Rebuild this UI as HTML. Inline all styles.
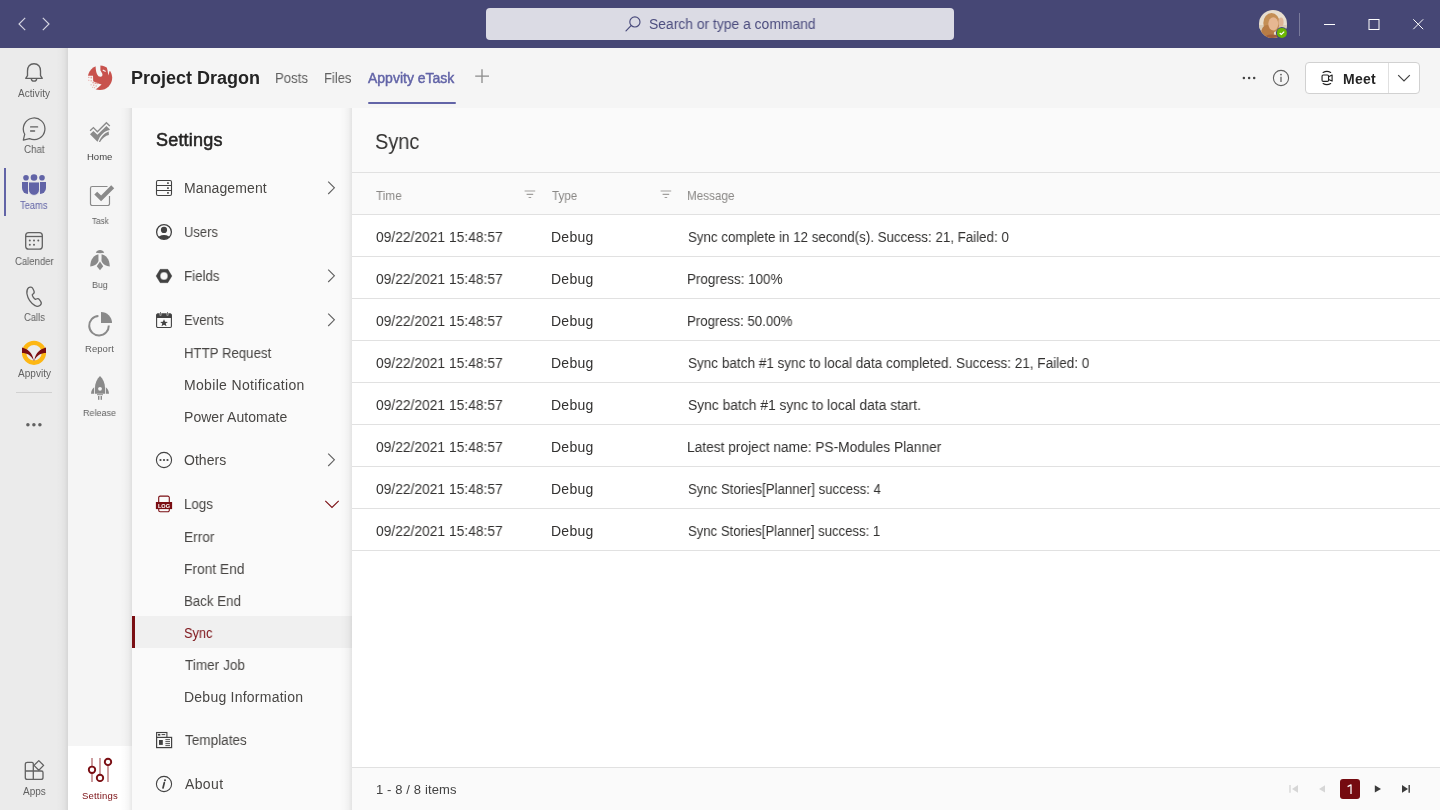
<!DOCTYPE html>
<html><head><meta charset="utf-8"><title>Sync</title>
<style>
*{box-sizing:border-box;margin:0;padding:0}
html,body{width:1440px;height:810px;overflow:hidden;font-family:"Liberation Sans",sans-serif;background:#fff}
.a{position:absolute;display:block}
.t{position:absolute;white-space:nowrap;line-height:1;will-change:transform}
</style></head><body>
<div class="a" style="left:0px;top:0px;width:1440px;height:48px;background:#464775"></div>
<svg class="a" style="left:0px;top:0px;" width="68" height="48" viewBox="0 0 68 48"><path d="M25.2 17.8 L19 24 L25.2 30.2" fill="none" stroke="#d6d6e2" stroke-width="1.15"/><path d="M42.8 17.8 L49 24 L42.8 30.2" fill="none" stroke="#d6d6e2" stroke-width="1.15"/></svg>
<div class="a" style="left:486px;top:8px;width:468px;height:32px;background:#dbdbe4;border-radius:4px"></div>
<svg class="a" style="left:620px;top:10px;" width="28" height="28" viewBox="0 0 28 28"><circle cx="14.9" cy="11.9" r="5.1" fill="none" stroke="#4a4b7c" stroke-width="1.15"/><path d="M11.1 15.7 L6 20.8" stroke="#4a4b7c" stroke-width="1.2" stroke-linecap="round"/></svg>
<div class="t" style="left:648.81px;top:17.15px;font-size:14px;color:#4b4c7e;transform:scaleX(0.9910);transform-origin:0 0">Search or type a command</div>
<svg class="a" style="left:1255px;top:6px;" width="36" height="36" viewBox="0 0 36 36"><defs><clipPath id="cc"><circle cx="18" cy="18" r="14"/></clipPath></defs><circle cx="18" cy="18" r="14" fill="#e8dece"/><g clip-path="url(#cc)"><rect x="4" y="19" width="28" height="4" fill="#d9ccb6"/><ellipse cx="16.5" cy="17" rx="8.2" ry="10" fill="#c48f55"/><ellipse cx="12.5" cy="27" rx="6.5" ry="8" fill="#b87c45"/><ellipse cx="18.3" cy="17.8" rx="5" ry="6.6" fill="#e6b792"/><ellipse cx="26" cy="16" rx="2.6" ry="4.5" fill="#e0b596"/><ellipse cx="17" cy="33.5" rx="9" ry="5" fill="#a2603a"/></g><circle cx="26.9" cy="26.9" r="6" fill="#464775"/><circle cx="26.9" cy="26.9" r="5" fill="#6bb700"/><path d="M24.7 27 L26.3 28.5 L29.2 25.6" fill="none" stroke="#fff" stroke-width="1.2"/></svg>
<div class="a" style="left:1299px;top:13px;width:1px;height:23px;background:rgba(255,255,255,0.28)"></div>
<svg class="a" style="left:1310px;top:10px;" width="120" height="28" viewBox="0 0 120 28"><path d="M14 14.5 H25" stroke="#fff" stroke-width="1"/><rect x="59" y="9.5" width="10" height="10" fill="none" stroke="#fff" stroke-width="1"/><path d="M103.3 9.3 L113.2 19.2 M113.2 9.3 L103.3 19.2" stroke="#fff" stroke-width="1"/></svg>
<div class="a" style="left:0px;top:48px;width:68px;height:762px;background:#ebebeb"></div>
<svg class="a" style="left:22px;top:60px;" width="24" height="24" viewBox="0 0 24 24"><path d="M12 3.7 C7.7 3.7 5.5 6.9 5.5 10.9 V15.7 L3.7 18.3 H20.3 L18.5 15.7 V10.9 C18.5 6.9 16.3 3.7 12 3.7 Z" fill="none" stroke="#616161" stroke-width="1.35" stroke-linejoin="round"/><path d="M9.3 18.5 A2.7 2.7 0 0 0 14.7 18.5" fill="none" stroke="#616161" stroke-width="1.3"/></svg>
<div class="t" style="left:18.00px;top:88.53px;font-size:10px;color:#616161;letter-spacing:0.043px">Activity</div>
<svg class="a" style="left:22px;top:116px;" width="24" height="26" viewBox="0 0 24 26"><path d="M2.75 18.2 A10.8 10.8 0 1 1 7.53 22.6 L1.3 24.1 Z" fill="none" stroke="#616161" stroke-width="1.25" stroke-linejoin="round"/><path d="M8.6 10.9 H15.6 M8.6 15 H12.6" stroke="#616161" stroke-width="1.3" stroke-linecap="round"/></svg>
<div class="t" style="left:23.51px;top:144.53px;font-size:10px;color:#616161;transform:scaleX(0.9756);transform-origin:0 0">Chat</div>
<div class="a" style="left:4px;top:168px;width:2px;height:48px;background:#6264a7"></div>
<svg class="a" style="left:22px;top:174px;" width="24" height="24" viewBox="0 0 24 24"><circle cx="4" cy="3.8" r="2.8" fill="#6264a7"/><circle cx="12" cy="3.5" r="3.3" fill="#6264a7"/><circle cx="20" cy="3.8" r="2.8" fill="#6264a7"/><path d="M0 8 H6 V20 A6 6 0 0 1 0 14 Z" fill="#6264a7"/><path d="M24 8 H18 V20 A6 6 0 0 0 24 14 Z" fill="#6264a7"/><path d="M6.5 8 H17.5 V15.9 A5.5 5.5 0 0 1 6.5 15.9 Z" fill="#6264a7" stroke="#ebebeb" stroke-width="0.9"/></svg>
<div class="t" style="left:20.31px;top:200.53px;font-size:10px;color:#6264a7;transform:scaleX(0.9343);transform-origin:0 0">Teams</div>
<svg class="a" style="left:22px;top:228px;" width="24" height="24" viewBox="0 0 24 24"><rect x="3.7" y="4.6" width="16.6" height="16.6" rx="3" fill="none" stroke="#616161" stroke-width="1.3"/><path d="M3.7 8.5 H20.3" stroke="#616161" stroke-width="1.3"/><circle cx="7.8" cy="12.6" r="1" fill="#616161"/><circle cx="12" cy="12.6" r="1" fill="#616161"/><circle cx="16.3" cy="12.6" r="1" fill="#616161"/><circle cx="7.8" cy="16.7" r="1" fill="#616161"/><circle cx="12" cy="16.7" r="1" fill="#616161"/></svg>
<div class="t" style="left:14.52px;top:256.54px;font-size:10px;color:#616161;transform:scaleX(0.9524);transform-origin:0 0">Calender</div>
<svg class="a" style="left:22.8px;top:284.4px;" width="24" height="24" viewBox="0 0 24 24"><path d="M5.5 3.7 C7 2.6 9 2.9 9.8 4.5 L10.9 6.8 C11.5 8 11.1 9.3 10.1 10 L9.3 10.6 C9.1 11.6 10.8 14.6 12.4 15.4 L13.4 15 C14.6 14.5 15.9 14.9 16.6 15.9 L17.8 17.7 C18.6 19 18.2 20.6 16.9 21.5 C15.4 22.5 13.5 22.6 12 21.6 C8 19.1 4.7 14.2 3.9 9.6 C3.6 7.3 4.2 4.9 5.5 3.7 Z" fill="none" stroke="#616161" stroke-width="1.25" stroke-linejoin="round"/></svg>
<div class="t" style="left:23.53px;top:312.54px;font-size:10px;color:#616161;transform:scaleX(0.9390);transform-origin:0 0">Calls</div>
<svg class="a" style="left:20px;top:340px;" width="28" height="28" viewBox="0 0 28 28"><circle cx="14" cy="12.8" r="9.9" fill="none" stroke="#fdb714" stroke-width="4.4"/><path d="M2 7.6 C7.5 9 12.3 12.5 13.6 20 L14.4 20 C15.7 12.5 20.5 9 26 7.6 L26 13 C21 13 16.5 15.5 14.4 20.4 L13.6 20.4 C11.5 15.5 7 13 2 13 Z" fill="#7a0e13"/></svg>
<div class="t" style="left:17.50px;top:368.54px;font-size:10px;color:#616161;letter-spacing:0.033px">Appvity</div>
<div class="a" style="left:16px;top:392px;width:36px;height:1px;background:#d1d1d1"></div>
<svg class="a" style="left:24px;top:418px;" width="20" height="12" viewBox="0 0 20 12"><circle cx="3.9" cy="6.8" r="1.75" fill="#616161"/><circle cx="9.9" cy="6.8" r="1.75" fill="#616161"/><circle cx="15.9" cy="6.8" r="1.75" fill="#616161"/></svg>
<svg class="a" style="left:22px;top:758px;" width="24" height="24" viewBox="0 0 24 24"><path d="M5.3 4.3 H10 A1.5 1.5 0 0 1 11.3 5.6 V21.4 H5.3 A2 2 0 0 1 3.3 19.4 V6.3 A2 2 0 0 1 5.3 4.3 Z" fill="none" stroke="#616161" stroke-width="1.3"/><path d="M3.3 13 H19.4 A1.6 1.6 0 0 1 21 14.6 V19.4 A2 2 0 0 1 19 21.4 H11.3" fill="none" stroke="#616161" stroke-width="1.3"/><path d="M16.8 2.6 L21.6 7.4 L16.8 12.2 L12 7.4 Z" fill="none" stroke="#616161" stroke-width="1.3" stroke-linejoin="round"/></svg>
<div class="t" style="left:23.00px;top:786.53px;font-size:10px;color:#616161;transform:scaleX(0.9821);transform-origin:0 0">Apps</div>
<div class="a" style="left:68px;top:48px;width:1372px;height:60px;background:#f5f5f5"></div>
<svg class="a" style="left:84px;top:62px;" width="32" height="32" viewBox="0 0 32 32"><circle cx="100" cy="77.8" r="12.2" transform="translate(-84 -62)" fill="#c8524d"/><path d="M11.4 2 L11.7 6 C12 11 13.6 14.8 16.4 14.8 C18.3 14.8 18.9 13 18.2 11.4 L16.4 8.3 L16.4 2 Z" fill="#f5f5f5"/><path d="M19 7.5 L21.9 8.9 L21.4 9.9 L18.5 8.6 Z" fill="#f5f5f5"/><path d="M22 2 L23.5 8.2 L24.4 13.6 L25.4 9.4 L28.5 6 L28.5 2 Z" fill="#f5f5f5"/><path d="M2 13.8 L9 13.8 L9.2 19.3 L13.5 21.2 L17.6 22.6 C15.5 24.5 13.5 26.2 11.6 27.6 L11.6 30 L2 30 Z" fill="#f5f5f5"/><g fill="#e3a39f"><rect x="4.2" y="14.8" width="1.2" height="1.2"/><rect x="6.5" y="14.8" width="1.6" height="1.6"/><rect x="4.3" y="17.8" width="1" height="1"/><rect x="6.6" y="18.2" width="1.2" height="1.2"/><rect x="8.4" y="19.8" width="1.5" height="1.5"/><rect x="10.6" y="20.2" width="1.8" height="1.8"/><rect x="12.6" y="20.8" width="1.4" height="1.4"/><rect x="6.6" y="22.3" width="1" height="1"/><rect x="9" y="22.6" width="1.4" height="1.1"/><rect x="11.6" y="23.4" width="1.2" height="1.2"/><rect x="8.2" y="24.8" width="1" height="1"/><rect x="10.1" y="25.2" width="1" height="1"/></g></svg>
<div class="t" style="left:131.40px;top:69.16px;font-size:18px;color:#242424;font-weight:bold;transform:scaleX(0.9984);transform-origin:0 0">Project Dragon</div>
<div class="t" style="left:275.16px;top:71.15px;font-size:14px;color:#616161;transform:scaleX(0.9431);transform-origin:0 0">Posts</div>
<div class="t" style="left:324.28px;top:71.15px;font-size:14px;color:#616161;transform:scaleX(0.9286);transform-origin:0 0">Files</div>
<div class="t" style="left:368.30px;top:71.15px;font-size:14px;color:#6264a7;-webkit-text-stroke:0.45px #6264a7">Appvity eTask</div>
<div class="a" style="left:368px;top:102px;width:88px;height:2px;background:#6264a7;border-radius:1px"></div>
<svg class="a" style="left:472px;top:66px;" width="20" height="20" viewBox="0 0 20 20"><path d="M10 3.2 V17 M3.2 10.1 H17" stroke="#8a8a8a" stroke-width="1.3"/></svg>
<svg class="a" style="left:1240px;top:70px;" width="20" height="16" viewBox="0 0 20 16"><circle cx="3.9" cy="8" r="1.25" fill="#424242"/><circle cx="9.1" cy="8" r="1.25" fill="#424242"/><circle cx="14.2" cy="8" r="1.25" fill="#424242"/></svg>
<svg class="a" style="left:1271px;top:68px;" width="20" height="20" viewBox="0 0 20 20"><circle cx="10" cy="10" r="7.6" fill="none" stroke="#616161" stroke-width="1.1"/><circle cx="10" cy="6.6" r="0.9" fill="#616161"/><path d="M10 8.8 V14" stroke="#616161" stroke-width="1.3"/></svg>
<div class="a" style="left:1305px;top:62px;width:115px;height:32px;background:#fff;border:1px solid #d1d1d1;border-radius:4px"></div>
<div class="a" style="left:1388px;top:63px;width:1px;height:30px;background:#e0e0e0"></div>
<svg class="a" style="left:1318px;top:68px;" width="18" height="20" viewBox="0 0 18 20"><path d="M5.1 4.5 Q8.9 2.2 12.7 4.5 M5.1 15.5 Q8.9 17.8 12.7 15.5" fill="none" stroke="#242424" stroke-width="1.1" stroke-linecap="round"/><rect x="4.05" y="6.95" width="6.5" height="6.45" rx="1.2" fill="none" stroke="#242424" stroke-width="1.15"/><path d="M10.6 8.7 L14.1 7.1 V13.1 L10.6 11.5" fill="none" stroke="#242424" stroke-width="1.15" stroke-linejoin="round"/></svg>
<div class="t" style="left:1343.10px;top:71.95px;font-size:14px;color:#242424;font-weight:bold;letter-spacing:0.233px">Meet</div>
<svg class="a" style="left:1394px;top:70px;" width="20" height="16" viewBox="0 0 20 16"><path d="M4.2 5.2 L10 11 L15.8 5.2" fill="none" stroke="#424242" stroke-width="1.2"/></svg>
<div class="a" style="left:68px;top:108px;width:64px;height:702px;background:#f5f5f5"></div>
<div class="a" style="left:68px;top:746px;width:64px;height:64px;background:#fff"></div>
<svg class="a" style="left:86px;top:118px;" width="28" height="28" viewBox="0 0 28 28"><polyline points="4.1,12.8 7.4,9.6 11.4,13.8 20.4,4.8 23.8,8" fill="none" stroke="#8a8a8a" stroke-width="1.35"/><path d="M4 16.3 L7.4 13 L11.4 16.8 L20.4 7.9 L23.8 11.2 L23.6 12 C18.5 13 14 17 11.8 23.5 L11.2 23.5 Z" fill="#8a8a8a"/><path d="M12.9 23.9 C15 18.7 18.5 15 22.7 13.6 L22.9 16.9 C19.5 17.6 16 20.2 14.1 23.9 Z" fill="#8a8a8a"/></svg>
<div class="t" style="left:87.21px;top:151.96px;font-size:9.5px;color:#424242;transform:scaleX(0.9917);transform-origin:0 0">Home</div>
<svg class="a" style="left:88px;top:184px;" width="28" height="24" viewBox="0 0 28 24"><path d="M19.5 2.5 H4.2 A1.7 1.7 0 0 0 2.5 4.2 V19.8 A1.7 1.7 0 0 0 4.2 21.5 H19.8 A1.7 1.7 0 0 0 21.5 19.8 V12" fill="none" stroke="#8a8a8a" stroke-width="1.2"/><path d="M6.3 10.6 L9.2 7.7 L13.1 11.5 L23.2 1.3 L26.2 4.3 L13.1 17.2 Z" fill="#8a8a8a"/></svg>
<div class="t" style="left:91.58px;top:215.96px;font-size:9.5px;color:#616161;transform:scaleX(0.8549);transform-origin:0 0">Task</div>
<svg class="a" style="left:88px;top:248px;" width="24" height="24" viewBox="0 0 24 24"><path d="M7.8 4.7 C8.5 2.9 10.1 2 12 2 C13.9 2 15.5 2.9 16.2 4.7 L12 5.2 Z" fill="#8a8a8a"/><path d="M10.4 6.2 C6 7 2.4 11 2.2 18.5 C5.6 18.3 9.2 16.5 10.5 13 Z" fill="#8a8a8a"/><path d="M13.6 6.2 C18 7 21.6 11 21.8 18.5 C18.4 18.3 14.8 16.5 13.5 13 Z" fill="#8a8a8a"/><path d="M12 13.5 L15.2 18.2 L12 22.2 L8.8 18.2 Z" fill="#8a8a8a"/></svg>
<div class="t" style="left:92.00px;top:279.96px;font-size:9.5px;color:#616161;transform:scaleX(0.9355);transform-origin:0 0">Bug</div>
<svg class="a" style="left:86px;top:310px;" width="28" height="28" viewBox="0 0 28 28"><path d="M12.4 5.9 A9.8 9.8 0 1 0 22.8 15.5" fill="none" stroke="#8a8a8a" stroke-width="2"/><path d="M15 2 A11 11 0 0 1 26 13 H15 Z" fill="#8a8a8a"/></svg>
<div class="t" style="left:85.20px;top:343.96px;font-size:9.5px;color:#616161;letter-spacing:0.060px">Report</div>
<svg class="a" style="left:88px;top:374px;" width="24" height="28" viewBox="0 0 24 28"><path d="M12 2 C15.3 5 17 9.5 17 13.5 V19.8 H7 V13.5 C7 9.5 8.7 5 12 2 Z" fill="#8a8a8a"/><circle cx="12" cy="14.8" r="1.9" fill="#f5f5f5"/><path d="M6.2 13.2 V19.8 H3 C3.1 17 4.3 14.6 6.2 13.2 Z" fill="#8a8a8a"/><path d="M17.8 13.2 V19.8 H21 C20.9 17 19.7 14.6 17.8 13.2 Z" fill="#8a8a8a"/><rect x="9" y="20.2" width="6" height="1" fill="#8a8a8a"/><rect x="10" y="22" width="1.4" height="3.8" fill="#8a8a8a"/><rect x="12.6" y="22" width="1.4" height="3.8" fill="#8a8a8a"/></svg>
<div class="t" style="left:83.24px;top:407.96px;font-size:9.5px;color:#616161;transform:scaleX(0.9496);transform-origin:0 0">Release</div>
<svg class="a" style="left:84px;top:754px;" width="32" height="32" viewBox="0 0 32 32"><path d="M8 4 V28 M16 4 V28 M24 4 V28" stroke="#b8787b" stroke-width="1.4"/><circle cx="8" cy="15.8" r="3.2" fill="#fff" stroke="#7a0e13" stroke-width="1.9"/><circle cx="16" cy="23.9" r="3.2" fill="#fff" stroke="#7a0e13" stroke-width="1.9"/><circle cx="24" cy="7.9" r="3.2" fill="#fff" stroke="#7a0e13" stroke-width="1.9"/></svg>
<div class="t" style="left:82.10px;top:790.96px;font-size:9.5px;color:#7a0e13;letter-spacing:0.200px">Settings</div>
<div class="a" style="left:132px;top:108px;width:220px;height:702px;background:#fafafa"></div>
<div class="t" style="left:155.70px;top:130.76px;font-size:18px;color:#252423;letter-spacing:0.200px;-webkit-text-stroke:0.55px #252423">Settings</div>
<svg class="a" style="left:154px;top:178px;" width="20" height="20" viewBox="0 0 20 20"><rect x="2.5" y="2.5" width="15" height="15" rx="1.4" fill="none" stroke="#424242" stroke-width="1.1"/><path d="M2.5 7.5 H17.5 M2.5 12.5 H17.5" stroke="#424242" stroke-width="1.1"/><rect x="13.1" y="4.2" width="1.7" height="1.7" rx="0.3" fill="#424242"/><rect x="13.1" y="9.2" width="1.7" height="1.7" rx="0.3" fill="#424242"/><rect x="13.1" y="14.1" width="1.7" height="1.7" rx="0.3" fill="#424242"/></svg>
<div class="t" style="left:183.90px;top:181.15px;font-size:14px;color:#484644;letter-spacing:0.111px">Management</div>
<svg class="a" style="left:324px;top:178px;" width="16" height="20" viewBox="0 0 16 20"><path d="M4.2 3.6 L10.4 9.8 L4.2 16" fill="none" stroke="#616161" stroke-width="1.1"/></svg>
<svg class="a" style="left:154px;top:222px;" width="20" height="20" viewBox="0 0 20 20"><defs><clipPath id="uc"><circle cx="10" cy="10" r="7.3"/></clipPath></defs><circle cx="10" cy="10" r="7.4" fill="none" stroke="#424242" stroke-width="1.3"/><circle cx="10" cy="7.9" r="3.1" fill="#424242"/><g clip-path="url(#uc)"><ellipse cx="10" cy="17.5" rx="6.5" ry="4.6" fill="#424242"/></g></svg>
<div class="t" style="left:183.98px;top:225.15px;font-size:14px;color:#484644;transform:scaleX(0.9286);transform-origin:0 0">Users</div>
<svg class="a" style="left:154px;top:266px;" width="20" height="20" viewBox="0 0 20 20"><path d="M6.2 3.3 H13.8 L17.9 10 L13.8 16.7 H6.2 L2.1 10 Z M10 6.1 A3.9 3.9 0 1 0 10 13.9 A3.9 3.9 0 1 0 10 6.1 Z" fill="#424242" fill-rule="evenodd" stroke="#424242" stroke-width="0.4" stroke-linejoin="round"/></svg>
<div class="t" style="left:183.95px;top:269.15px;font-size:14px;color:#484644;transform:scaleX(0.9524);transform-origin:0 0">Fields</div>
<svg class="a" style="left:324px;top:266px;" width="16" height="20" viewBox="0 0 16 20"><path d="M4.2 3.6 L10.4 9.8 L4.2 16" fill="none" stroke="#616161" stroke-width="1.1"/></svg>
<svg class="a" style="left:154px;top:310px;" width="20" height="20" viewBox="0 0 20 20"><rect x="2.6" y="4" width="14.8" height="13.5" rx="1.2" fill="none" stroke="#424242" stroke-width="1.1"/><path d="M2.6 4.5 A1 1 0 0 1 3.6 3.6 H16.4 A1 1 0 0 1 17.4 4.5 V8 H2.6 Z" fill="#424242"/><path d="M6.5 1.8 V5.6 M13.5 1.8 V5.6" stroke="#fafafa" stroke-width="1.6"/><path d="M6.5 2 V5.2 M13.5 2 V5.2" stroke="#424242" stroke-width="0.7"/><path d="M10 9.2 L11.1 11.8 L13.9 11.9 L11.7 13.6 L12.5 16.3 L10 14.7 L7.5 16.3 L8.3 13.6 L6.1 11.9 L8.9 11.8 Z" fill="#424242"/></svg>
<div class="t" style="left:183.97px;top:313.15px;font-size:14px;color:#484644;transform:scaleX(0.9345);transform-origin:0 0">Events</div>
<svg class="a" style="left:324px;top:310px;" width="16" height="20" viewBox="0 0 16 20"><path d="M4.2 3.6 L10.4 9.8 L4.2 16" fill="none" stroke="#616161" stroke-width="1.1"/></svg>
<div class="t" style="left:183.96px;top:346.15px;font-size:14px;color:#484644;transform:scaleX(0.9440);transform-origin:0 0">HTTP Request</div>
<div class="t" style="left:183.90px;top:378.15px;font-size:14px;color:#484644;letter-spacing:0.333px">Mobile Notification</div>
<div class="t" style="left:183.90px;top:410.15px;font-size:14px;color:#484644;letter-spacing:0.038px">Power Automate</div>
<svg class="a" style="left:154px;top:450px;" width="20" height="20" viewBox="0 0 20 20"><circle cx="10" cy="10" r="7.6" fill="none" stroke="#424242" stroke-width="1.1"/><circle cx="6.5" cy="10" r="1.1" fill="#424242"/><circle cx="10" cy="10" r="1.1" fill="#424242"/><circle cx="13.5" cy="10" r="1.1" fill="#424242"/></svg>
<div class="t" style="left:184.30px;top:452.65px;font-size:14px;color:#484644;letter-spacing:0.040px">Others</div>
<svg class="a" style="left:324px;top:450px;" width="16" height="20" viewBox="0 0 16 20"><path d="M4.2 3.6 L10.4 9.8 L4.2 16" fill="none" stroke="#616161" stroke-width="1.1"/></svg>
<svg class="a" style="left:154px;top:494px;will-change:transform" width="20" height="20" viewBox="0 0 20 20"><path d="M4.7 8 V3.6 A1.5 1.5 0 0 1 6.2 2.1 H13.8 A1.5 1.5 0 0 1 15.3 3.6 V8 M4.7 15 V16.3 A1.5 1.5 0 0 0 6.2 17.8 H13.8 A1.5 1.5 0 0 0 15.3 16.3 V15" fill="none" stroke="#7a0e13" stroke-width="1.1"/><rect x="1.9" y="8" width="16.2" height="7.1" fill="#7a0e13"/><text x="10" y="13.7" font-family="Liberation Sans" font-weight="bold" font-size="5.6" fill="#fff" text-anchor="middle">LOG</text></svg>
<div class="t" style="left:183.95px;top:497.15px;font-size:14px;color:#484644;transform:scaleX(0.9549);transform-origin:0 0">Logs</div>
<svg class="a" style="left:322px;top:494px;" width="20" height="20" viewBox="0 0 20 20"><path d="M3.3 6.8 L10 13.4 L16.7 6.8" fill="none" stroke="#7a0e13" stroke-width="1.1"/></svg>
<div class="t" style="left:183.93px;top:530.15px;font-size:14px;color:#484644;transform:scaleX(0.9764);transform-origin:0 0">Error</div>
<div class="t" style="left:183.92px;top:562.15px;font-size:14px;color:#484644;transform:scaleX(0.9832);transform-origin:0 0">Front End</div>
<div class="t" style="left:183.96px;top:594.15px;font-size:14px;color:#484644;transform:scaleX(0.9499);transform-origin:0 0">Back End</div>
<div class="a" style="left:132px;top:616px;width:220px;height:32px;background:#f0f0f0"></div>
<div class="a" style="left:132px;top:616px;width:3px;height:32px;background:#7a0e13"></div>
<div class="t" style="left:184.36px;top:626.15px;font-size:14px;color:#7a0e13;transform:scaleX(0.9167);transform-origin:0 0">Sync</div>
<div class="t" style="left:184.71px;top:657.65px;font-size:14px;color:#484644;transform:scaleX(0.9704);transform-origin:0 0">Timer Job</div>
<div class="t" style="left:183.90px;top:690.15px;font-size:14px;color:#484644;letter-spacing:0.237px">Debug Information</div>
<svg class="a" style="left:154px;top:730px;" width="20" height="20" viewBox="0 0 20 20"><rect x="2.6" y="2.5" width="10.3" height="5.5" fill="none" stroke="#424242" stroke-width="1.1"/><rect x="3.9" y="3.9" width="2.4" height="1.7" fill="#424242"/><path d="M7.6 4.6 H11.2" stroke="#424242" stroke-width="1"/><rect x="2.6" y="7.4" width="15" height="10.2" fill="#fafafa" stroke="#424242" stroke-width="1.2"/><rect x="5" y="10" width="3.8" height="4.9" fill="#424242"/><path d="M11.4 9.6 H16 M11.4 11.6 H16 M11.4 13.6 H16 M11.4 15.6 H16" stroke="#424242" stroke-width="0.9"/></svg>
<div class="t" style="left:184.71px;top:733.15px;font-size:14px;color:#484644;transform:scaleX(0.9683);transform-origin:0 0">Templates</div>
<svg class="a" style="left:154px;top:774px;" width="20" height="20" viewBox="0 0 20 20"><circle cx="10" cy="10" r="7.6" fill="none" stroke="#424242" stroke-width="1.1"/><circle cx="11" cy="6.3" r="1.05" fill="#424242"/><path d="M10.3 8.7 L9 14" stroke="#424242" stroke-width="1.7" stroke-linecap="round"/></svg>
<div class="t" style="left:185.00px;top:777.15px;font-size:14px;color:#484644;letter-spacing:0.375px">About</div>
<div class="a" style="left:352px;top:108px;width:1088px;height:702px;background:#fff"></div>
<div class="a" style="left:352px;top:108px;width:1088px;height:64px;background:#fafafa"></div>
<div class="t" style="left:375.40px;top:130.68px;font-size:22px;color:#323130;transform:scaleX(0.9049);transform-origin:0 0">Sync</div>
<div class="a" style="left:352px;top:172px;width:1088px;height:1px;background:#e1e1e1"></div>
<div class="a" style="left:352px;top:173px;width:1088px;height:41px;background:#fafafa"></div>
<div class="t" style="left:376.03px;top:188.80px;font-size:13px;color:#8a8886;transform:scaleX(0.9058);transform-origin:0 0">Time</div>
<div class="t" style="left:552.23px;top:188.80px;font-size:13px;color:#8a8886;transform:scaleX(0.8942);transform-origin:0 0">Type</div>
<div class="t" style="left:687.31px;top:188.80px;font-size:13px;color:#8a8886;transform:scaleX(0.9002);transform-origin:0 0">Message</div>
<svg class="a" style="left:524px;top:189.5px;" width="12" height="9" viewBox="0 0 12 9"><path d="M0.6 1 H11.2 M2.6 4.3 H9.2 M4.6 7.5 H7.2" stroke="#a19f9d" stroke-width="1.2"/></svg>
<svg class="a" style="left:660px;top:189.5px;" width="12" height="9" viewBox="0 0 12 9"><path d="M0.6 1 H11.2 M2.6 4.3 H9.2 M4.6 7.5 H7.2" stroke="#a19f9d" stroke-width="1.2"/></svg>
<div class="a" style="left:352px;top:214px;width:1088px;height:1px;background:#e1e1e1"></div>
<div class="t" style="left:375.81px;top:230.15px;font-size:14px;color:#323130;transform:scaleX(0.9859);transform-origin:0 0">09/22/2021 15:48:57</div>
<div class="t" style="left:551.40px;top:230.15px;font-size:14px;color:#323130;letter-spacing:0.250px">Debug</div>
<div class="t" style="left:687.63px;top:230.15px;font-size:14px;color:#323130;transform:scaleX(0.9520);transform-origin:0 0">Sync complete in 12 second(s). Success: 21, Failed: 0</div>
<div class="a" style="left:352px;top:256px;width:1088px;height:1px;background:#e1e1e1"></div>
<div class="t" style="left:375.81px;top:272.15px;font-size:14px;color:#323130;transform:scaleX(0.9859);transform-origin:0 0">09/22/2021 15:48:57</div>
<div class="t" style="left:551.40px;top:272.15px;font-size:14px;color:#323130;letter-spacing:0.250px">Debug</div>
<div class="t" style="left:687.25px;top:272.15px;font-size:14px;color:#323130;transform:scaleX(0.9582);transform-origin:0 0">Progress: 100%</div>
<div class="a" style="left:352px;top:298px;width:1088px;height:1px;background:#e1e1e1"></div>
<div class="t" style="left:375.81px;top:314.15px;font-size:14px;color:#323130;transform:scaleX(0.9859);transform-origin:0 0">09/22/2021 15:48:57</div>
<div class="t" style="left:551.40px;top:314.15px;font-size:14px;color:#323130;letter-spacing:0.250px">Debug</div>
<div class="t" style="left:687.26px;top:314.15px;font-size:14px;color:#323130;transform:scaleX(0.9480);transform-origin:0 0">Progress: 50.00%</div>
<div class="a" style="left:352px;top:340px;width:1088px;height:1px;background:#e1e1e1"></div>
<div class="t" style="left:375.81px;top:356.15px;font-size:14px;color:#323130;transform:scaleX(0.9859);transform-origin:0 0">09/22/2021 15:48:57</div>
<div class="t" style="left:551.40px;top:356.15px;font-size:14px;color:#323130;letter-spacing:0.250px">Debug</div>
<div class="t" style="left:687.62px;top:356.15px;font-size:14px;color:#323130;transform:scaleX(0.9674);transform-origin:0 0">Sync batch #1 sync to local data completed. Success: 21, Failed: 0</div>
<div class="a" style="left:352px;top:382px;width:1088px;height:1px;background:#e1e1e1"></div>
<div class="t" style="left:375.81px;top:398.15px;font-size:14px;color:#323130;transform:scaleX(0.9859);transform-origin:0 0">09/22/2021 15:48:57</div>
<div class="t" style="left:551.40px;top:398.15px;font-size:14px;color:#323130;letter-spacing:0.250px">Debug</div>
<div class="t" style="left:687.61px;top:398.15px;font-size:14px;color:#323130;transform:scaleX(0.9880);transform-origin:0 0">Sync batch #1 sync to local data start.</div>
<div class="a" style="left:352px;top:424px;width:1088px;height:1px;background:#e1e1e1"></div>
<div class="t" style="left:375.81px;top:440.15px;font-size:14px;color:#323130;transform:scaleX(0.9859);transform-origin:0 0">09/22/2021 15:48:57</div>
<div class="t" style="left:551.40px;top:440.15px;font-size:14px;color:#323130;letter-spacing:0.250px">Debug</div>
<div class="t" style="left:687.22px;top:440.15px;font-size:14px;color:#323130;transform:scaleX(0.9814);transform-origin:0 0">Latest project name: PS-Modules Planner</div>
<div class="a" style="left:352px;top:466px;width:1088px;height:1px;background:#e1e1e1"></div>
<div class="t" style="left:375.81px;top:482.15px;font-size:14px;color:#323130;transform:scaleX(0.9859);transform-origin:0 0">09/22/2021 15:48:57</div>
<div class="t" style="left:551.40px;top:482.15px;font-size:14px;color:#323130;letter-spacing:0.250px">Debug</div>
<div class="t" style="left:687.64px;top:482.15px;font-size:14px;color:#323130;transform:scaleX(0.9430);transform-origin:0 0">Sync Stories[Planner] success: 4</div>
<div class="a" style="left:352px;top:508px;width:1088px;height:1px;background:#e1e1e1"></div>
<div class="t" style="left:375.81px;top:524.15px;font-size:14px;color:#323130;transform:scaleX(0.9859);transform-origin:0 0">09/22/2021 15:48:57</div>
<div class="t" style="left:551.40px;top:524.15px;font-size:14px;color:#323130;letter-spacing:0.250px">Debug</div>
<div class="t" style="left:687.64px;top:524.15px;font-size:14px;color:#323130;transform:scaleX(0.9395);transform-origin:0 0">Sync Stories[Planner] success: 1</div>
<div class="a" style="left:352px;top:550px;width:1088px;height:1px;background:#e1e1e1"></div>
<div class="a" style="left:352px;top:767px;width:1088px;height:1px;background:#e1e1e1"></div>
<div class="a" style="left:352px;top:768px;width:1088px;height:42px;background:#fafafa"></div>
<div class="t" style="left:375.70px;top:782.80px;font-size:13px;color:#424242;letter-spacing:0.121px">1 - 8 / 8 items</div>
<svg class="a" style="left:1286px;top:780px;overflow:visible" width="120" height="18" viewBox="0 0 120 18"><path d="M4 5 V12.8" stroke="#d6d6d6" stroke-width="1.4"/><path d="M12 5 V12.8 L6 8.9 Z" fill="#d6d6d6"/><path d="M39 5.2 V12.6 L33 8.9 Z" fill="#d6d6d6"/><path d="M88.8 5.2 V12.6 L95 8.9 Z" fill="#3b3b3b"/><path d="M116 5 V12.8 L122 8.9 Z" fill="#3b3b3b"/><path d="M123.2 5 V12.8" stroke="#3b3b3b" stroke-width="1.4"/></svg>
<div class="a" style="left:1340px;top:779px;width:20px;height:20px;background:#750b10;border-radius:3px"></div>
<svg class="a" style="left:1340px;top:779px;" width="20" height="20" viewBox="0 0 20 20"><path d="M7.6 7.6 L11 5.9 V14.9" fill="none" stroke="#fff" stroke-width="1.25" stroke-linejoin="round"/></svg>
<div class="a" style="left:56px;top:48px;width:12px;height:762px;background:linear-gradient(90deg,rgba(0,0,0,0) 0%,rgba(0,0,0,0.012) 35%,rgba(0,0,0,0.035) 70%,rgba(0,0,0,0.09) 100%)"></div>
<div class="a" style="left:120px;top:108px;width:12px;height:702px;background:linear-gradient(90deg,rgba(0,0,0,0) 0%,rgba(0,0,0,0.012) 35%,rgba(0,0,0,0.035) 70%,rgba(0,0,0,0.09) 100%)"></div>
<div class="a" style="left:340px;top:108px;width:12px;height:702px;background:linear-gradient(90deg,rgba(0,0,0,0) 0%,rgba(0,0,0,0.012) 35%,rgba(0,0,0,0.035) 70%,rgba(0,0,0,0.09) 100%)"></div>
</body></html>
